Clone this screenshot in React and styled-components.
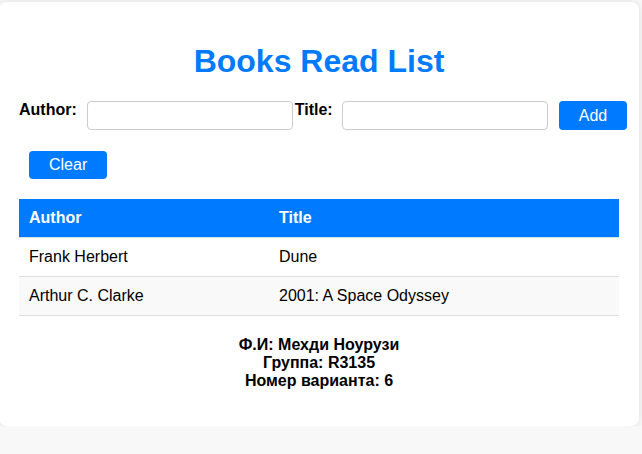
import React, { useState } from "react";
import styled, { createGlobalStyle } from "styled-components";

const GlobalStyle = createGlobalStyle`
  body {
    margin: 0;
    background: #f8f8f8;
    font-family: "Liberation Sans", Arial, sans-serif;
    font-size: 16px;
    color: #000;
  }
`;

const Card = styled.div`
  width: 600px;
  margin: 2px 0 0 -1px;
  padding: 20px;
  background: #fff;
  border-radius: 8px;
  box-shadow: 0 0 10px rgba(0, 0, 0, 0.1);
`;

const Heading = styled.h1`
  margin: 21px 0;
  font-size: 32px;
  line-height: 37px;
  text-align: center;
  color: #007bff;
`;

const Form = styled.form`
  display: flex;
  align-items: flex-start;
`;

const Label = styled.label`
  flex-shrink: 0;
  font-weight: bold;
  line-height: 18px;
  margin-right: ${(p) => p.$gap || 10}px;
`;

const Input = styled.input`
  flex-shrink: 0;
  box-sizing: border-box;
  width: 206px;
  height: 29px;
  margin: 0 2px 0 0;
  padding: 0 8px;
  border: 1px solid #ccc;
  border-radius: 4px;
  font: inherit;
`;

const Button = styled.button`
  flex-shrink: 0;
  height: ${(p) => p.$h || 29}px;
  margin-left: ${(p) => p.$ml || 10}px;
  padding: 0 20px;
  border: none;
  border-radius: 4px;
  background: #007bff;
  color: #fff;
  font-family: inherit;
  font-size: 16px;
  cursor: pointer;
`;

const Actions = styled.div`
  display: flex;
  margin-top: 21px;
`;

const Table = styled.table`
  width: 100%;
  margin: 20px 0;
  border-collapse: collapse;
`;

const Th = styled.th`
  padding: 10px;
  text-align: left;
  line-height: 18px;
  background: #007bff;
  color: #fff;
  border-bottom: 1px solid #ddd;
  width: ${(p) => p.$w || "auto"};
`;

const Row = styled.tr`
  background: ${(p) => (p.$odd ? "#f9f9f9" : "#fff")};
`;

const Td = styled.td`
  padding: 10px;
  line-height: 18px;
  border-bottom: 1px solid #ddd;
`;

const Footer = styled.p`
  margin: 16px 0;
  text-align: center;
  font-weight: bold;
  line-height: 18px;
`;

const books = [
  { author: "Frank Herbert", title: "Dune" },
  { author: "Arthur C. Clarke", title: "2001: A Space Odyssey" },
];

export default function App() {
  const [author, setAuthor] = useState("");
  const [title, setTitle] = useState("");

  return (
    <>
      <GlobalStyle />
      <Card>
        <Heading>Books Read List</Heading>
        <Form onSubmit={(e) => e.preventDefault()}>
          <Label>Author:</Label>
          <Input value={author} onChange={(e) => setAuthor(e.target.value)} />
          <Label $gap={9}>Title:</Label>
          <Input value={title} onChange={(e) => setTitle(e.target.value)} />
          <Button $ml={9}>Add</Button>
        </Form>
        <Actions>
          <Button type="button" $h={28}>Clear</Button>
        </Actions>
        <Table>
          <thead>
            <tr>
              <Th $w="230px">Author</Th>
              <Th>Title</Th>
            </tr>
          </thead>
          <tbody>
            {books.map((b, i) => (
              <Row key={b.title} $odd={i % 2 === 1}>
                <Td>{b.author}</Td>
                <Td>{b.title}</Td>
              </Row>
            ))}
          </tbody>
        </Table>
        <Footer>
          Ф.И: Мехди Ноурузи
          <br />
          Группа: R3135
          <br />
          Номер варианта: 6
        </Footer>
      </Card>
    </>
  );
}
